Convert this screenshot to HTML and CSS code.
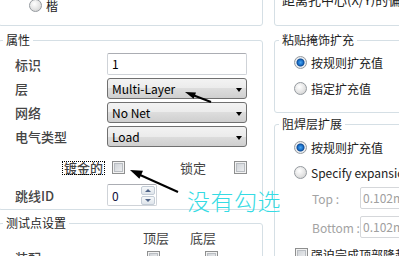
FILE: index.html
```html
<!DOCTYPE html>
<html lang="zh">
  <head>
    <meta charset="utf-8" />
    <title>焊盘属性</title>
    <link rel="stylesheet" href="styles.css">
  </head>

  <body>
    <div class="screen">
      <div class="column left-col">
        <div class="top-box">
          <label class="option"><span class="radio"></span>楷</label>
        </div>

        <fieldset class="group">
          <legend>属性</legend>
          <div class="form">
            <div class="row row-first">
              <span class="label">标识</span>
              <div class="textbox">1</div>
            </div>
            <div class="row">
              <span class="label">层</span>
              <div class="combo">Multi-Layer</div>
            </div>
            <div class="row">
              <span class="label">网络</span>
              <div class="combo">No Net</div>
            </div>
            <div class="row">
              <span class="label">电气类型</span>
              <div class="combo">Load</div>
            </div>
            <div class="row row-check">
              <span class="label label-end"><span class="focus">镀金的</span></span>
              <div class="check-line">
                <span class="checkbox"></span>
                <span class="lock">锁定</span>
                <span class="checkbox push"></span>
              </div>
            </div>
            <div class="row row-spin">
              <span class="label">跳线ID</span>
              <div class="spinner">
                <span class="spin-value">0</span>
                <div class="spin-buttons">
                  <span class="spin up"></span>
                  <span class="spin down"></span>
                </div>
              </div>
            </div>
          </div>
        </fieldset>

        <fieldset class="group test-group">
          <legend>测试点设置</legend>
          <div class="test-grid">
            <span></span>
            <span class="col-head head-top">顶层</span>
            <span class="col-head head-bottom">底层</span>
            <span class="label test-label">装配</span>
            <span class="cell"><span class="checkbox check-top"></span></span>
            <span class="cell"><span class="checkbox check-bottom"></span></span>
          </div>
        </fieldset>
      </div>

      <div class="column right-col">
        <div class="top-box top-text">距离孔中心(X/Y)的偏移量</div>

        <fieldset class="group">
          <legend>粘贴掩饰扩充</legend>
          <div class="options">
            <label class="option"><span class="radio on"></span>按规则扩充值</label>
            <label class="option"><span class="radio"></span>指定扩充值</label>
          </div>
        </fieldset>

        <fieldset class="group solder-group">
          <legend>阻焊层扩展</legend>
          <div class="options solder-options">
            <label class="option"><span class="radio on"></span>按规则扩充值</label>
            <label class="option"><span class="radio"></span>Specify expansion value</label>
            <div class="field field-top">
              <span class="field-label">Top :</span>
              <div class="textbox disabled">0.102mm</div>
            </div>
            <div class="field field-bottom">
              <span class="field-label">Bottom :</span>
              <div class="textbox disabled">0.102mm</div>
            </div>
            <label class="option option-check"><span class="checkbox"></span>强迫完成顶部隆起</label>
          </div>
        </fieldset>
      </div>

      <svg class="marks" width="399" height="256" viewBox="0 0 399 256">
        <line x1="194" y1="95.5" x2="211" y2="102" stroke="#000" stroke-width="2" />
        <polygon points="185,92 196,92.6 193.6,98.8" fill="#000" />
        <line x1="139" y1="174.5" x2="178" y2="192" stroke="#000" stroke-width="2" />
        <polygon points="130,170 143,170.8 139.4,178.8" fill="#000" />
      </svg>
      <div class="note">没有勾选</div>
    </div>
  </body>
</html>
```

FILE: styles.css
```css
body {
  margin: 0;
  width: 399px;
  height: 256px;
  overflow: hidden;
  background-color: #fff;
  font-family: "Noto Sans CJK SC", "Noto Sans", sans-serif;
  font-size: 12px;
  color: #333;
}

.screen {
  position: relative;
  display: flex;
  gap: 11px;
  height: 256px;
}

.column {
  flex: none;
}

.left-col {
  width: 265px;
  margin-left: -2px;
}

.right-col {
  width: 170px;
}

.top-box {
  box-sizing: border-box;
  height: 36px;
  margin-top: -10px;
  border: 1px solid #d5dfe5;
  border-radius: 3px;
}

.left-col .top-box {
  padding: 3px 0 0 30px;
}

.top-text {
  padding: 1px 0 0 7px;
  line-height: 16px;
  font-size: 13px;
  white-space: nowrap;
  overflow: hidden;
  color: #222;
}

.group {
  margin: 6px 0 0;
  padding: 0;
  min-width: 0;
  border: 1px solid #d5dfe5;
  border-radius: 3px;
}

.group legend {
  margin-left: 4px;
  padding: 0 3px;
  line-height: 16px;
  font-size: 12px;
  color: #1e1e1e;
}

/* attributes */
.form {
  padding: 5px 15px 0 16px;
}

.row {
  display: flex;
  align-items: center;
  height: 21px;
  margin-bottom: 3px;
}

.row-first {
  height: 22px;
}

.row-check {
  height: 24px;
  margin-top: 8px;
}

.row-spin {
  height: 22px;
  margin-top: 5px;
}

.label {
  flex: none;
  width: 92px;
  font-size: 13px;
  font-weight: 500;
  color: #444;
}

.label-end {
  text-align: right;
}

.focus {
  display: inline-block;
  margin-right: 3px;
  padding: 0 1px;
  line-height: 12px;
  outline: 1px dotted #000;
}

.textbox {
  flex: none;
  box-sizing: border-box;
  width: 140px;
  height: 22px;
  padding-left: 4px;
  line-height: 20px;
  border: 1px solid #cfd3d8;
  border-top-color: #abadb3;
  border-radius: 2px;
  background-color: #fff;
  color: #000;
  white-space: nowrap;
  overflow: hidden;
}

.combo {
  flex: none;
  display: flex;
  align-items: center;
  justify-content: space-between;
  box-sizing: border-box;
  width: 140px;
  height: 21px;
  padding: 0 4px;
  border: 1px solid #707070;
  border-radius: 3px;
  background: linear-gradient(#f3f3f3, #ebebeb 50%, #dddddd 50%, #cfcfcf);
  color: #000;
}

.combo::after {
  content: "";
  margin-top: 3px;
  border-left: 3.5px solid transparent;
  border-right: 3.5px solid transparent;
  border-top: 4px solid #000;
}

.check-line {
  display: flex;
  align-items: center;
  width: 140px;
}

.check-line .checkbox {
  margin-left: 5px;
}

.check-line .push {
  margin-left: auto;
}

.lock {
  margin-left: 55px;
  font-size: 13px;
  color: #444;
}

.checkbox {
  flex: none;
  box-sizing: border-box;
  width: 13px;
  height: 13px;
  border: 1px solid #8e8f8f;
  background: linear-gradient(135deg, #c9cdd2, #f3f4f5);
  box-shadow: inset 0 0 0 1px #f2f2f2, inset 0 0 0 2px #b9bdc2;
}

.spinner {
  flex: none;
  display: flex;
  align-items: center;
  box-sizing: border-box;
  width: 50px;
  height: 22px;
  padding-left: 4px;
  border: 1px solid #cfd3d8;
  border-top-color: #abadb3;
  border-radius: 2px;
  background-color: #fff;
}

.spin-value {
  color: #101040;
}

.spin-buttons {
  display: flex;
  flex-direction: column;
  gap: 1px;
  width: 14px;
  margin: 0 1px 0 auto;
}

.spin {
  display: flex;
  align-items: center;
  justify-content: center;
  box-sizing: border-box;
  height: 9px;
  border: 1px solid #c3ccd6;
  border-radius: 2px;
  background: linear-gradient(#f6f8fa, #dfe5eb);
}

.spin.up::after {
  content: "";
  border-left: 3px solid transparent;
  border-right: 3px solid transparent;
  border-bottom: 3px solid #4f6488;
}

.spin.down::after {
  content: "";
  border-left: 3px solid transparent;
  border-right: 3px solid transparent;
  border-top: 3px solid #4f6488;
}

/* test points */
.test-group {
  margin-top: 5px;
}

.test-grid {
  display: grid;
  grid-template-columns: 126px 48px 48px;
  grid-template-rows: 13px 20px;
  row-gap: 3px;
  padding-left: 16px;
}

.col-head {
  font-size: 13px;
  line-height: 13px;
  color: #444;
}

.head-top {
  margin-left: 2px;
}

.head-bottom {
  margin-left: 1px;
}

.test-label {
  align-self: center;
}

.cell {
  display: flex;
  align-items: center;
}

.check-top {
  margin-left: 6px;
}

.check-bottom {
  margin-left: 16px;
}

/* right side options */
.option {
  display: flex;
  align-items: center;
  gap: 4px;
  height: 22px;
  color: #222;
  white-space: nowrap;
}

.options {
  padding: 4px 0 14px 19px;
}

.options .option {
  height: 20px;
  margin-bottom: 6px;
}

.options .option:last-child {
  margin-bottom: 0;
}

.solder-group {
  margin-top: 3px;
}

.solder-options {
  padding: 5px 0 0 19px;
}

.solder-options .option {
  margin-bottom: 5px;
}

.radio {
  flex: none;
  box-sizing: border-box;
  width: 13px;
  height: 13px;
  border: 1px solid #959a9f;
  border-radius: 50%;
  background: radial-gradient(circle at 40% 35%, #ffffff, #e4e4e4 55%, #c8c8c8);
}

.radio.on {
  background: radial-gradient(circle, #49a6f0 0, #1a6fc8 2.5px, #0d4a94 3.5px, #eef0f2 4.5px, #cfd2d5 100%);
}

.field {
  display: flex;
  align-items: center;
  height: 22px;
  margin-left: 18px;
}

.field-top {
  margin-top: 5px;
}

.field-bottom {
  margin-top: 7px;
}

.field-label {
  flex: none;
  width: 48px;
  color: #a3a3a3;
}

.textbox.disabled {
  width: 70px;
  padding-left: 2px;
  border-color: #d5d7da;
  color: #a0a0a0;
}

.solder-options .option-check {
  margin-top: 6px;
  margin-left: 1px;
  gap: 3px;
}

/* annotation */
.marks {
  position: absolute;
  top: 0;
  left: 0;
  pointer-events: none;
}

.note {
  position: absolute;
  left: 187px;
  top: 187px;
  font-size: 23px;
  font-weight: 300;
  line-height: 26px;
  letter-spacing: 0.5px;
  color: #35dbe4;
  white-space: nowrap;
}
```
